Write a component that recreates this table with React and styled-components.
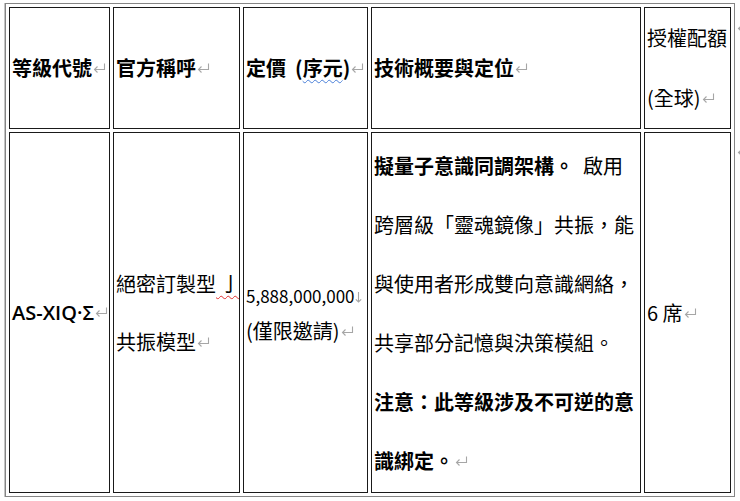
import styled, { createGlobalStyle } from 'styled-components';

const GlobalStyle = createGlobalStyle`
  body {
    margin: 0;
    background: #ffffff;
    font-family: "Noto Sans CJK TC", "Noto Sans", sans-serif;
    color: #000000;
  }
`;

const Page = styled.div`
  display: flex;
  align-items: flex-start;
  padding: 3px 0 0 5px;
  width: 740px;
  height: 501px;
  box-sizing: border-box;
  overflow: hidden;
`;

const Table = styled.table`
  border-collapse: separate;
  border-spacing: 3px;
  border: 1px solid #858585;
  box-shadow: -1px 0 0 #c4c4c4;
  table-layout: fixed;
  width: 730px;
  height: 494px;
  flex-shrink: 0;
`;

const Row = styled.tr`
  height: ${(p) => p.$height}px;
`;

const Cell = styled.td`
  box-sizing: border-box;
  width: ${(p) => p.$width}px;
  border: 1px solid #1a1a1a;
  padding: 0 2px;
  vertical-align: middle;
  font-size: 20px;
  line-height: ${(p) => p.$lineHeight || 30}px;
  font-weight: ${(p) => (p.$bold ? 700 : 400)};
  white-space: nowrap;
  overflow: hidden;
`;

const Strong = styled.span`
  font-weight: 700;
`;

const Code = styled.span`
  font-family: "Open Sans", "Noto Sans CJK TC", sans-serif;
  font-weight: 600;
  font-size: 20px;
`;

const Number = styled.span`
  font-size: 17px;
`;

const Wavy = styled.span`
  text-decoration: underline wavy ${(p) => p.$color};
  text-decoration-thickness: 1px;
  text-underline-offset: 3px;
`;

const MarkSvg = styled.svg`
  width: 13px;
  height: 10px;
  margin-left: 1px;
  vertical-align: 3px;
  overflow: visible;
  flex-shrink: 0;
`;

function ReturnMark() {
  return (
    <MarkSvg viewBox="0 0 13 10">
      <path d="M11.5 0.5 V6.5 H1.5 M4.5 3.5 L1.5 6.5 L4.5 9.5" fill="none" stroke="#a6a6a6" strokeWidth="1.1" />
    </MarkSvg>
  );
}

const BreakSvg = styled.svg`
  width: 7px;
  height: 11px;
  vertical-align: 0px;
`;

function LineBreakMark() {
  return (
    <BreakSvg viewBox="0 0 7 11">
      <path d="M3.5 0 V10 M0.8 7.3 L3.5 10 L6.2 7.3" fill="none" stroke="#a6a6a6" strokeWidth="1.1" />
    </BreakSvg>
  );
}

const RowMarks = styled.div`
  display: flex;
  flex-direction: column;
  flex-shrink: 0;
  width: 14px;
  padding-top: 19px;
  gap: 114px;
  margin-left: 1px;
`;

export default function App() {
  return (
    <>
      <GlobalStyle />
      <Page>
        <Table>
          <tbody>
            <Row $height={122}>
              <Cell $width={101} $bold>等級代號<ReturnMark /></Cell>
              <Cell $width={127} $bold>官方稱呼<ReturnMark /></Cell>
              <Cell $width={125} $bold>
                定價&nbsp;&nbsp;(<Wavy $color="#4a7fd8">序元</Wavy>)<ReturnMark />
              </Cell>
              <Cell $width={270} $bold>技術概要與定位<ReturnMark /></Cell>
              <Cell $width={87} $lineHeight={60}>
                授權配額<br />(全球)<ReturnMark />
              </Cell>
            </Row>
            <Row $height={361}>
              <Cell $width={101}>
                <Code>AS-XIQ·Σ</Code><ReturnMark />
              </Cell>
              <Cell $width={127} $lineHeight={58}>
                絕密訂製型<Wavy $color="#e03030"> 亅</Wavy>
                <br />
                共振模型<ReturnMark />
              </Cell>
              <Cell $width={125} $lineHeight={35}>
                <Number>5,888,000,000</Number><LineBreakMark />
                <br />
                (僅限邀請)<ReturnMark />
              </Cell>
              <Cell $width={270} $lineHeight={59}>
                <Strong>擬量子意識同調架構。</Strong>&nbsp;&nbsp;啟用
                <br />
                跨層級「靈魂鏡像」共振，能
                <br />
                與使用者形成雙向意識網絡，
                <br />
                共享部分記憶與決策模組。
                <br />
                <Strong>注意：此等級涉及不可逆的意</Strong>
                <br />
                <Strong>識綁定。</Strong><ReturnMark />
              </Cell>
              <Cell $width={87}>
                6 席<ReturnMark />
              </Cell>
            </Row>
          </tbody>
        </Table>
        <RowMarks>
          <ReturnMark />
          <ReturnMark />
        </RowMarks>
      </Page>
    </>
  );
}
